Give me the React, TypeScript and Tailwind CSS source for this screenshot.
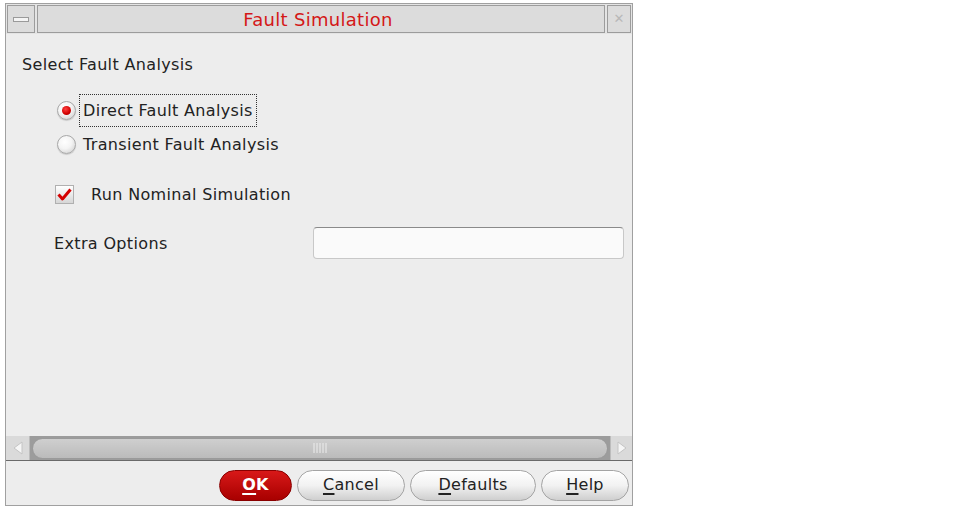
import React from "react";

const font = "font-['DejaVu_Sans',sans-serif]";

function Radio({ checked }: { checked?: boolean }) {
  return (
    <span className="flex h-[19px] w-[19px] items-center justify-center rounded-full border border-[#a8a8a8] bg-[radial-gradient(circle_at_40%_35%,#ffffff_0%,#f4f4f4_45%,#c9c9c9_100%)] shadow-[0_1px_1px_rgba(0,0,0,0.15)]">
      {checked && (
        <span className="h-[9px] w-[9px] rounded-full bg-[radial-gradient(circle_at_40%_35%,#ff4040_0%,#d00000_60%,#900000_100%)]" />
      )}
    </span>
  );
}

function Checkbox() {
  return (
    <span className="flex h-[19px] w-[19px] items-center justify-center border border-[#b0b0b0] bg-gradient-to-b from-[#ffffff] to-[#d6d6d6]">
      <svg width="15" height="13" viewBox="0 0 15 13">
        <path d="M1.5 6.5 L5.5 11 L13.5 1.5" fill="none" stroke="#d40000" strokeWidth="3" strokeLinejoin="round" />
      </svg>
    </span>
  );
}

function Btn({ label, u, w, primary }: { label: string; u: string; w: string; primary?: boolean }) {
  const rest = label.slice(1);
  return (
    <button
      className={`${w} flex h-[31px] items-center justify-center rounded-full text-[16px] tracking-[0.3px] ${
        primary
          ? "bg-gradient-to-b from-[#d81818] to-[#a80000] text-white font-bold border border-[#8a0000]"
          : "border border-[#a4a4a4] bg-gradient-to-b from-[#ffffff] via-[#f2f2f2] to-[#cfcfcf] text-[#222]"
      }`}
    >
      <span className="underline underline-offset-[3px] decoration-[1.5px]">{u}</span>
      {rest}
    </button>
  );
}

export default function App() {
  return (
    <div className={`h-[508px] w-[976px] bg-white pl-[5px] pt-[3px] ${font}`}>
      <div className="flex h-[503px] w-[628px] flex-col border border-[#a0a0a0] bg-[#ededed]">
        {/* title bar */}
        <div className="flex h-[30px] gap-[2px] px-[1px] pt-[1px] pb-[1px] bg-[#e4e4e4]">
          <div className="flex w-[28px] items-center justify-center border border-[#9c9c9c] bg-[#dcdcdc]">
            <span className="h-[5px] w-[16px] border border-[#9a9a9a] bg-[#f4f4f4]" />
          </div>
          <div className="flex flex-1 items-center justify-center border border-[#9c9c9c] bg-[#dcdcdc] pr-[6px] text-[18px] tracking-[0.3px] text-[#d41818]">
            Fault Simulation
          </div>
          <div className="flex w-[24px] items-center justify-center border border-[#9c9c9c] bg-[#dcdcdc] text-[13px] text-[#b8b8b8]">
            ✕
          </div>
        </div>

        {/* content */}
        <div className="flex flex-1 flex-col text-[16px] tracking-[0.35px] text-[#222]">
          <div className="ml-[16px] mt-[21px] leading-[20px]">Select Fault Analysis</div>

          <div className="ml-[51px] mt-[19px] flex items-center gap-[3px]">
            <Radio checked />
            <span className="border border-dotted border-[#333] px-[3px] py-[6px] leading-[19px]">Direct Fault Analysis</span>
          </div>
          <div className="ml-[51px] mt-[8px] flex items-center gap-[7px]">
            <Radio />
            <span className="leading-[19px]">Transient Fault Analysis</span>
          </div>

          <div className="ml-[49px] mt-[31px] flex items-center gap-[17px]">
            <Checkbox />
            <span className="leading-[19px]">Run Nominal Simulation</span>
          </div>

          <div className="ml-[48px] mt-[23px] flex items-center">
            <span className="w-[259px] leading-[19px]">Extra Options</span>
            <div className="h-[32px] w-[311px] rounded-[4px] border border-[#c8c8c8] border-t-[#8a8a8a] bg-[#fafafa]" />
          </div>
        </div>

        {/* scrollbar */}
        <div className="flex h-[25px] border-b border-[#6a6a6a]">
          <div className="flex w-[24px] items-center justify-center border-r border-[#bcbcbc] bg-[#dadada]">
            <svg width="10" height="14" viewBox="0 0 10 14"><path d="M9 1 L1 7 L9 13 Z" fill="#f6f6f6" stroke="#c4c4c4" /></svg>
          </div>
          <div className="flex flex-1 items-center bg-[#9c9c9c] px-[2px]">
            <div className="flex h-[21px] flex-1 items-center justify-center rounded-full border border-[#9a9a9a] bg-gradient-to-b from-[#cfcfcf] to-[#bbbbbb]">
              <svg width="14" height="10" viewBox="0 0 14 10">
                {[1, 4, 7, 10, 13].map((x) => (
                  <line key={x} x1={x} y1="0" x2={x} y2="10" stroke="#ededed" strokeWidth="1" />
                ))}
              </svg>
            </div>
          </div>
          <div className="flex w-[22px] items-center justify-center border-l border-[#bcbcbc] bg-[#dadada]">
            <svg width="10" height="14" viewBox="0 0 10 14"><path d="M1 1 L9 7 L1 13 Z" fill="#f6f6f6" stroke="#c4c4c4" /></svg>
          </div>
        </div>

        {/* buttons */}
        <div className="flex flex-1 max-h-[44px] items-center justify-end gap-[5px] pr-[3px] pt-[4px]">
          <Btn label="OK" u="O" w="w-[73px]" primary />
          <Btn label="Cancel" u="C" w="w-[108px]" />
          <Btn label="Defaults" u="D" w="w-[126px]" />
          <Btn label="Help" u="H" w="w-[88px]" />
        </div>
      </div>
    </div>
  );
}
